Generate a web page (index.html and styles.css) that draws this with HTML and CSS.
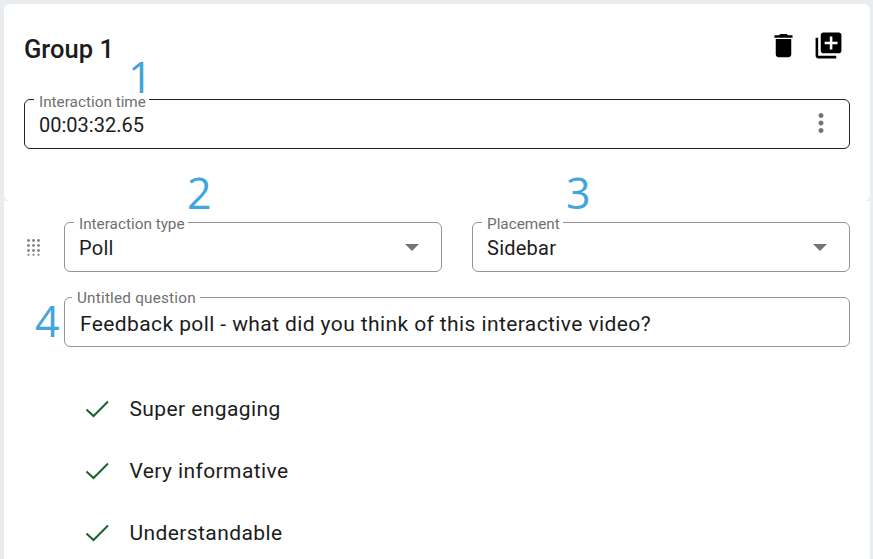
FILE: index.html
```html
<!DOCTYPE html>
<html lang="en">
<head>
<meta charset="utf-8">
<title>Group 1</title>
<link rel="stylesheet" href="styles.css">
</head>
<body>
<section class="card card-top">
  <header class="group-head">
    <h2 class="group-title">Group 1</h2>
    <div class="group-actions">
      <svg class="icon" viewBox="0 0 24 24" width="31" height="31"><path d="M6 19c0 1.1.9 2 2 2h8c1.1 0 2-.9 2-2V7H6v12zM19 4h-3.5l-1-1h-5l-1 1H5v2h14V4z"/></svg>
      <svg class="icon" viewBox="0 0 24 24" width="31" height="31"><path d="M4 6H2v14c0 1.1.9 2 2 2h14v-2H4V6zm16-4H8c-1.1 0-2 .9-2 2v12c0 1.1.9 2 2 2h12c1.1 0 2-.9 2-2V4c0-1.100-.9-2-2-2zm-1 9h-4v4h-2v-4H9V9h4V5h2v4h4v2z"/></svg>
    </div>
  </header>
  <div class="field field-dark">
    <span class="field-label label-time">Interaction time</span>
    <span class="field-value">00:03:32.65</span>
    <svg class="field-more" viewBox="0 0 24 24" width="30" height="30"><path d="M12 8c1.100 0 2-.9 2-2s-.9-2-2-2-2 .9-2 2 .9 2 2 2zm0 2c-1.100 0-2 .9-2 2s.9 2 2 2 2-.9 2-2-.9-2-2-2zm0 6c-1.100 0-2 .9-2 2s.9 2 2 2 2-.9 2-2-.9-2-2-2z"/></svg>
  </div>
  <span class="marker marker-1">1</span>
</section>
<section class="card card-main">
  <div class="select-row">
    <svg class="drag" viewBox="0 0 15 17" width="15" height="17"><g class="drag-dots"><circle cx="1.500" cy="1.500" r="1.400"/><circle cx="6.500" cy="1.500" r="1.400"/><circle cx="11.500" cy="1.500" r="1.400"/><circle cx="1.500" cy="6.500" r="1.400"/><circle cx="6.500" cy="6.500" r="1.400"/><circle cx="11.500" cy="6.500" r="1.400"/><circle cx="1.500" cy="11.500" r="1.400"/><circle cx="6.500" cy="11.500" r="1.400"/><circle cx="11.500" cy="11.500" r="1.400"/><circle cx="1.500" cy="15.800" r="1.100"/><circle cx="6.500" cy="15.800" r="1.100"/><circle cx="11.500" cy="15.800" r="1.100"/></g></svg>
    <div class="field">
      <span class="field-label label-select">Interaction type</span>
      <span class="field-value value-select">Poll</span>
      <span class="caret"></span>
    </div>
    <div class="field">
      <span class="field-label label-select">Placement</span>
      <span class="field-value value-select">Sidebar</span>
      <span class="caret"></span>
    </div>
  </div>
  <div class="question-row">
    <div class="field">
      <span class="field-label label-question">Untitled question</span>
      <span class="field-value value-question">Feedback poll - what did you think of this interactive video?</span>
    </div>
  </div>
  <ul class="options">
    <li class="option"><svg class="check" viewBox="0 0 24 18" width="24" height="18"><path d="M1.500 9.500 8.500 16 23 1.500"/></svg>Super engaging</li>
    <li class="option"><svg class="check" viewBox="0 0 24 18" width="24" height="18"><path d="M1.500 9.500 8.500 16 23 1.500"/></svg>Very informative</li>
    <li class="option"><svg class="check" viewBox="0 0 24 18" width="24" height="18"><path d="M1.500 9.500 8.500 16 23 1.500"/></svg>Understandable</li>
  </ul>
  <span class="marker marker-2">2</span>
  <span class="marker marker-3">3</span>
  <span class="marker marker-4">4</span>
</section>
</body>
</html>
```
FILE: styles.css
```css
* { box-sizing: border-box; }
html, body { margin: 0; height: 559px; overflow: hidden; }
body {
  background: #e9edf0;
  font-family: Roboto, "Liberation Sans", sans-serif;
  color: #1c1c1c;
  padding: 4px 3px 0 4px;
}
.card { background: #fff; position: relative; }
.card-top {
  height: 197px;
  border-radius: 6px;
  padding: 28px 20px 0;
}
.card-main {
  height: 358px;
  padding: 21px 20px 0;
}
.group-head {
  display: flex;
  justify-content: space-between;
  align-items: flex-start;
  height: 34px;
  margin-bottom: 33px;
}
.group-title {
  margin: 0;
  font-size: 25.5px;
  font-weight: 500;
  line-height: 34px;
}
.group-actions { display: flex; gap: 14px; margin: -2px 6px 0 0; }
.icon { fill: #000; display: block; }
.field {
  position: relative;
  display: flex;
  align-items: center;
  flex: 1;
  height: 50px;
  border: 1px solid #949494;
  border-radius: 6px;
  padding: 0 14px;
}
.field-dark { border-color: #222; }
.field-label {
  position: absolute;
  left: 9px;
  padding: 0 3px 0 5px;
  background: #fff;
  font-size: 15.3px;
  line-height: 16px;
  color: #6f6f6f;
}
.label-time { top: -6px; }
.label-select { top: -7px; }
.label-question { top: -8px; left: 7px; padding-right: 4px; letter-spacing: 0.2px; }
.field-value {
  font-size: 20px;
  line-height: 24px;
  padding-top: 1px;
}
.value-select { letter-spacing: 0.25px; }
.value-question { font-size: 21px; padding: 4px 0 0 1px; letter-spacing: 0.4px; }
.field-more { position: absolute; right: 13px; top: 8px; fill: #757575; }
.caret {
  position: absolute;
  right: 22px;
  top: 21px;
  width: 0;
  height: 0;
  border-left: 7px solid transparent;
  border-right: 7px solid transparent;
  border-top: 7px solid #757575;
}
.select-row {
  display: flex;
  align-items: center;
  gap: 30px;
}
.drag { flex: none; margin: 0 -8px 0 3px; }
.drag-dots { fill: #828282; }
.question-row { margin: 25px 0 0 40px; display: flex; }
.options { list-style: none; margin: 31px 0 0; padding: 0 0 0 61px; }
.option {
  display: flex;
  align-items: center;
  height: 62px;
  font-size: 21px;
  letter-spacing: 0.4px;
}
.check {
  flex: none;
  margin-right: 20.5px;
  fill: none;
  stroke: #17632f;
  stroke-width: 2;
}
.marker {
  position: absolute;
  font-family: "Open Sans", sans-serif;
  font-size: 43px;
  line-height: 32px;
  color: #42a5dc;
}
.marker-1 { left: 124px; top: 57px; }
.marker-2 { left: 183px; top: -24px; }
.marker-3 { left: 562px; top: -24px; }
.marker-4 { left: 31px; top: 104px; }
```
